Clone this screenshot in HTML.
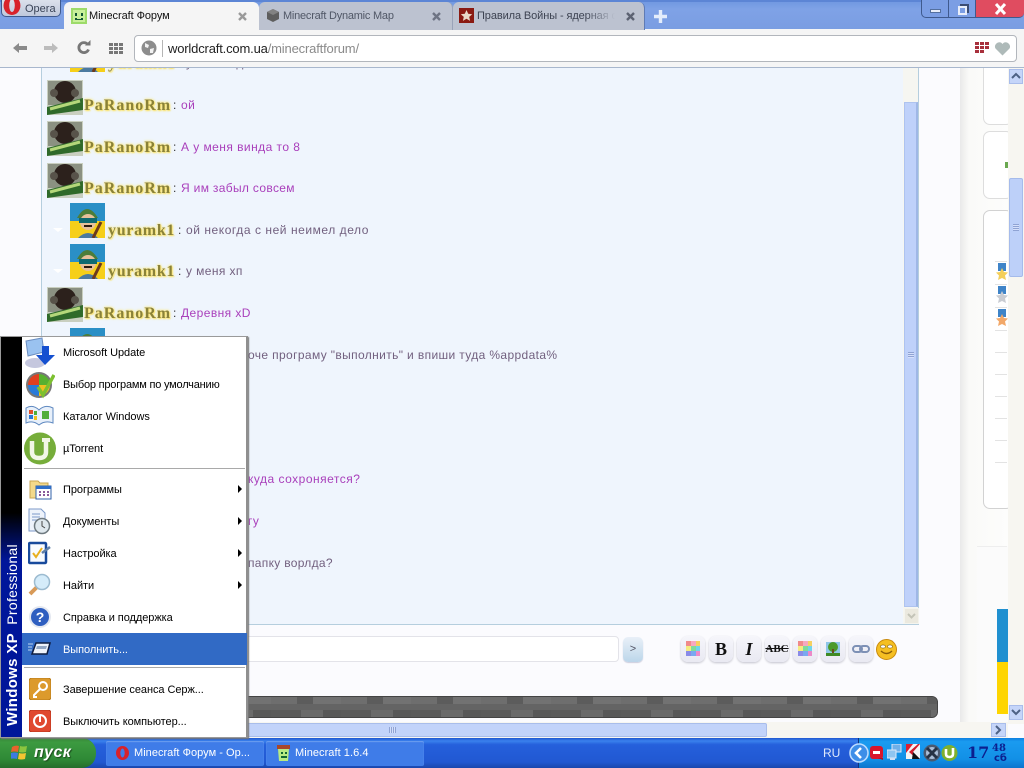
<!DOCTYPE html>
<html lang="ru"><head><meta charset="utf-8"><title>Minecraft Форум</title>
<style>
*{box-sizing:border-box}
html,body{margin:0;padding:0;width:1024px;height:768px;overflow:hidden;background:#fbfbfe;font-family:"Liberation Sans","DejaVu Sans",sans-serif}
.a{position:absolute}
.t{position:absolute;white-space:nowrap;line-height:14px}
.msg{position:absolute;font-size:12px;letter-spacing:.45px;white-space:nowrap;line-height:14px;color:#a93fbb}
.g{color:#72607f}
.name{position:absolute;font:bold 16px/18px "Liberation Serif",serif;letter-spacing:1px;color:#8a8238;white-space:nowrap;text-shadow:0 0 2px #ffe97a,0 0 3px #ffe97a,1px 1px 1px #f7e27a}
.y{letter-spacing:.7px}
.mi{position:absolute;left:63px;font-size:11px;letter-spacing:-.06px;line-height:14px;color:#000;white-space:nowrap}
.arr{position:absolute;left:238px;width:0;height:0;border-left:4px solid #000;border-top:4px solid transparent;border-bottom:4px solid transparent}
.tb{position:absolute;top:636px;width:24px;height:26px;border-radius:7px;background:linear-gradient(#f6f6fb,#e9e9f2);box-shadow:0 1px 2px #c2c2cc;text-align:center}
.hl{position:absolute;left:995px;width:12px;height:1px;background:#e3e3e3}
.tri{position:absolute;left:53px;width:0;height:0;border-left:5px solid transparent;border-right:5px solid transparent;border-top:4px solid #fff}
</style></head><body>
<svg width="0" height="0" style="position:absolute"><defs>
<symbol id="p" viewBox="0 0 36 35"><rect width="36" height="35" fill="#c9cfc0"/><rect x="1" y="1" width="34" height="24" fill="#8b9182"/><circle cx="18" cy="12" r="11" fill="#2c211c"/><circle cx="7" cy="13" r="4" fill="#58534a"/><circle cx="28" cy="13" r="4" fill="#58534a"/><path d="M0 27 L36 18 L36 30 L0 35Z" fill="#2f6a2a"/><path d="M3 29 L33 21" stroke="#b4d77a" stroke-width="3"/></symbol>
<symbol id="y" viewBox="0 0 35 35"><rect width="35" height="18" fill="#2a8fc6"/><rect y="18" width="35" height="17" fill="#f6cf19"/><path d="M7 15 Q17 -3 28 15Z" fill="#4c7d3a"/><ellipse cx="18" cy="19" rx="8" ry="8" fill="#e7c09a"/><rect x="9" y="15" width="18" height="5" fill="#0f6a70"/><path d="M14 23h8" stroke="#2a1a10" stroke-width="2"/><path d="M8 35 Q18 25 28 35Z" fill="#4b7aa0"/><path d="M23 35 L31 19" stroke="#6b3a1e" stroke-width="3"/></symbol>
</defs></svg>

<!-- page content -->
<div class="a" style="left:0;top:68px;width:1008px;height:656px;background:#fbfbfe"></div>
<div class="a" style="left:960px;top:68px;width:48px;height:656px;background:linear-gradient(90deg,#e9e9e9,#fafaf8 9px,#fdfdfc)"></div>
<div class="a" style="left:41px;top:68px;width:878px;height:557px;background:#eff5fd;border:1px solid #b5cede;border-top:0"></div>

<!-- right widgets -->
<div class="a" style="left:983px;top:60px;width:30px;height:65px;border:1px solid #ddd;border-radius:7px;background:#fff"></div>
<div class="a" style="left:983px;top:131px;width:30px;height:68px;border:1px solid #ddd;border-radius:7px;background:#fff"></div>
<div class="a" style="left:1005px;top:162px;width:3px;height:6px;background:#6aa84f"></div>
<div class="a" style="left:983px;top:210px;width:30px;height:299px;border:1px solid #d2d2d2;border-radius:7px;background:#fff"></div>
<div class="hl" style="top:261px"></div><div class="hl" style="top:284px"></div><div class="hl" style="top:307px"></div><div class="hl" style="top:330px"></div><div class="hl" style="top:352px"></div><div class="hl" style="top:374px"></div><div class="hl" style="top:396px"></div><div class="hl" style="top:418px"></div><div class="hl" style="top:440px"></div><div class="hl" style="top:462px"></div>
<svg class="a" style="left:995px;top:262px" width="14" height="70" viewBox="0 0 14 70"><path d="M3 1h8v8H3z" fill="#3f84c8"/><path d="M7 6l2 4 4 .5-3 3 1 4.500-4-2-4 2 1-4.500-3-3 4-.5z" fill="#f4cf5a"/><path d="M3 24h8v8H3z" fill="#3f84c8"/><path d="M7 29l2 4 4 .5-3 3 1 4.500-4-2-4 2 1-4.500-3-3 4-.5z" fill="#c9ccd2"/><path d="M3 47h8v8H3z" fill="#3f84c8"/><path d="M7 52l2 4 4 .5-3 3 1 4.500-4-2-4 2 1-4.500-3-3 4-.5z" fill="#f2a869"/></svg>
<div class="a" style="left:977px;top:546px;width:31px;height:178px;background:#fbfbfb"></div>
<div class="a" style="left:977px;top:546px;width:30px;height:1px;background:#eee"></div>
<div class="a" style="left:997px;top:609px;width:11px;height:53px;background:#2090d0"></div>
<div class="a" style="left:997px;top:662px;width:11px;height:52px;background:#fed500"></div>

<!-- chat -->
<svg class="a" style="left:70px;top:37px" width="35" height="35"><use href="#y"/></svg>
<div class="name y" style="left:108px;top:55px">yuramk1</div>
<div class="msg g" style="left:186px;top:56px">у меня хд</div>
<svg class="a" style="left:47px;top:80px" width="36" height="35"><use href="#p"/></svg>
<div class="name" style="left:84px;top:97px">PaRanoRm</div><div class="t" style="left:173px;top:98px;font-size:12px;color:#333">:</div><div class="msg" style="left:181px;top:98px">ой</div>
<svg class="a" style="left:47px;top:121px" width="36" height="35"><use href="#p"/></svg>
<div class="name" style="left:84px;top:139px">PaRanoRm</div><div class="t" style="left:173px;top:140px;font-size:12px;color:#333">:</div><div class="msg" style="left:181px;top:140px">А у меня винда то 8</div>
<svg class="a" style="left:47px;top:163px" width="36" height="35"><use href="#p"/></svg>
<div class="name" style="left:84px;top:180px">PaRanoRm</div><div class="t" style="left:173px;top:181px;font-size:12px;color:#333">:</div><div class="msg" style="left:181px;top:181px;letter-spacing:.33px">Я им забыл совсем</div>
<svg class="a" style="left:70px;top:203px" width="35" height="35"><use href="#y"/></svg><div class="tri" style="top:228px"></div>
<div class="name y" style="left:108px;top:222px">yuramk1</div><div class="t" style="left:178px;top:223px;font-size:12px;color:#333">:</div><div class="msg g" style="left:186px;top:223px;letter-spacing:.55px">ой некогда с ней неимел дело</div>
<svg class="a" style="left:70px;top:244px" width="35" height="35"><use href="#y"/></svg><div class="tri" style="top:269px"></div>
<div class="name y" style="left:108px;top:263px">yuramk1</div><div class="t" style="left:178px;top:264px;font-size:12px;color:#333">:</div><div class="msg g" style="left:186px;top:264px;letter-spacing:.4px">у меня хп</div>
<svg class="a" style="left:47px;top:287px" width="36" height="35"><use href="#p"/></svg>
<div class="name" style="left:84px;top:305px">PaRanoRm</div><div class="t" style="left:173px;top:306px;font-size:12px;color:#333">:</div><div class="msg" style="left:181px;top:306px;letter-spacing:.42px">Деревня xD</div>
<svg class="a" style="left:70px;top:328px" width="35" height="35"><use href="#y"/></svg>
<div class="msg g" style="left:248px;top:348px;letter-spacing:.37px">оче програму "выполнить" и впиши туда %appdata%</div>
<div class="msg" style="left:248px;top:472px;letter-spacing:.5px">куда сохроняется?</div>
<div class="msg" style="left:248px;top:514px">гу</div>
<div class="msg g" style="left:248px;top:556px;letter-spacing:.3px">папку ворлда?</div>

<!-- inner scrollbar -->
<div class="a" style="left:903px;top:68px;width:15px;height:556px;background:#f6f6f1"></div>
<div class="a" style="left:904px;top:102px;width:14px;height:505px;background:#bfd1fa;border:1px solid #aec3ef;border-right:2px solid #9fb7e6"></div>
<div class="a" style="left:908px;top:352px;width:6px;height:6px;background:repeating-linear-gradient(#8fa3d4 0 1px,#d6e0fb 1px 2px)"></div>
<div class="a" style="left:904px;top:608px;width:15px;height:16px;background:#ebe9df;border:1px solid #f4f4ee"></div>
<svg class="a" style="left:906px;top:611px" width="11" height="10"><path d="M2 3l3.500 3.500L9 3" fill="none" stroke="#c4c4b8" stroke-width="2"/></svg>

<!-- input row -->
<div class="a" style="left:240px;top:636px;width:379px;height:26px;background:#fff;border:1px solid #e3e3e9;border-radius:0 4px 4px 0"></div>
<div class="a" style="left:623px;top:637px;width:20px;height:25px;border-radius:5px;background:linear-gradient(#e9f0f8,#bcd6ea);box-shadow:0 1px 1px #ccd;text-align:center;font-size:11px;line-height:25px;color:#556">&gt;</div>
<div class="tb" style="left:681px"><svg width="14" height="16" style="margin-top:5px"><g><rect x="0" y="0" width="5" height="5" fill="#f08a8a"/><rect x="5" y="0" width="5" height="5" fill="#f6a8c0"/><rect x="10" y="0" width="4" height="5" fill="#f5d060"/><rect x="0" y="5" width="5" height="5" fill="#f4ec80"/><rect x="5" y="5" width="5" height="5" fill="#7fdc9a"/><rect x="10" y="5" width="4" height="5" fill="#70d4ec"/><rect x="0" y="10" width="5" height="5" fill="#8a8be8"/><rect x="5" y="10" width="5" height="5" fill="#7aa8f0"/><rect x="10" y="10" width="4" height="5" fill="#ec8ac8"/></g></svg></div>
<div class="tb" style="left:709px;font:bold 18px/26px 'Liberation Serif',serif;color:#111">B</div>
<div class="tb" style="left:737px;font:italic bold 18px/26px 'Liberation Serif',serif;color:#111">I</div>
<div class="tb" style="left:765px;font:bold 11px/26px 'Liberation Serif',serif;color:#111;text-decoration:line-through">ABC</div>
<div class="tb" style="left:793px"><svg width="14" height="16" style="margin-top:5px"><g><rect x="0" y="0" width="5" height="5" fill="#f08a8a"/><rect x="5" y="0" width="5" height="5" fill="#f6a8c0"/><rect x="10" y="0" width="4" height="5" fill="#f5d060"/><rect x="0" y="5" width="5" height="5" fill="#f4ec80"/><rect x="5" y="5" width="5" height="5" fill="#7fdc9a"/><rect x="10" y="5" width="4" height="5" fill="#70d4ec"/><rect x="0" y="10" width="5" height="5" fill="#8a8be8"/><rect x="5" y="10" width="5" height="5" fill="#7aa8f0"/><rect x="10" y="10" width="4" height="5" fill="#ec8ac8"/></g></svg></div>
<div class="tb" style="left:821px"><svg width="16" height="16" style="margin-top:5px"><rect x="1" y="1" width="14" height="13" fill="#8fc6e8"/><circle cx="8" cy="6" r="5" fill="#4c9a2a"/><rect x="7" y="8" width="2" height="5" fill="#6b4a20"/><rect x="1" y="12" width="14" height="3" fill="#3f8a24"/></svg></div>
<div class="tb" style="left:849px"><svg width="18" height="12" style="margin-top:7px"><rect x="1" y="3" width="9" height="6" rx="3" fill="none" stroke="#7d90b5" stroke-width="2"/><rect x="8" y="3" width="9" height="6" rx="3" fill="none" stroke="#7d90b5" stroke-width="2"/></svg></div>
<svg class="a" style="left:876px;top:639px" width="21" height="21"><circle cx="10.500" cy="10.500" r="10" fill="#f5bf22" stroke="#c98a0d"/><ellipse cx="7" cy="7.500" rx="2.500" ry="1.600" fill="#fff" stroke="#7a5a10" stroke-width=".6"/><ellipse cx="14" cy="7.500" rx="2.500" ry="1.600" fill="#fff" stroke="#7a5a10" stroke-width=".6"/><path d="M5 12q5.500 5 11 0" fill="none" stroke="#8a5d0a" stroke-width="1.400"/></svg>

<!-- stone bar -->
<div class="a" style="left:200px;top:696px;width:738px;height:22px;border-radius:0 6px 6px 0;border:1px solid #444;background:#646464;overflow:hidden">
<div class="a" style="left:0;top:0;width:100%;height:7px;background:repeating-linear-gradient(90deg,#6e6e6e 0 26px,#5c5c5c 26px 42px,#727272 42px 70px)"></div>
<div class="a" style="left:0;top:13px;width:100%;height:8px;background:repeating-linear-gradient(90deg,#5a5a5a 0 30px,#6a6a6a 30px 52px,#585858 52px 70px)"></div>
</div>

<!-- main scrollbars -->
<div class="a" style="left:1008px;top:68px;width:16px;height:656px;background:#f7f6f1"></div>
<div class="a" style="left:1009px;top:69px;width:14px;height:15px;background:#c5d5f9;border:1px solid #a9bdeb"></div>
<svg class="a" style="left:1010px;top:71px" width="12" height="11"><path d="M2 7l4-4 4 4" fill="none" stroke="#4d6185" stroke-width="2"/></svg>
<div class="a" style="left:1009px;top:178px;width:14px;height:99px;background:#bdd0f9;border:1px solid #a5bbeb;border-radius:2px"></div>
<div class="a" style="left:1013px;top:224px;width:6px;height:7px;background:repeating-linear-gradient(#8fa3d4 0 1px,#d6e0fb 1px 2px)"></div>
<div class="a" style="left:1009px;top:705px;width:14px;height:15px;background:#c5d5f9;border:1px solid #a9bdeb"></div>
<svg class="a" style="left:1010px;top:707px" width="12" height="11"><path d="M2 3l4 4 4-4" fill="none" stroke="#4d6185" stroke-width="2"/></svg>
<div class="a" style="left:0;top:722px;width:1008px;height:16px;background:#f7f6f1"></div>
<div class="a" style="left:200px;top:723px;width:567px;height:14px;background:#c2d3fa;border:1px solid #a9bdeb;border-radius:2px"></div>
<div class="a" style="left:389px;top:727px;width:7px;height:6px;background:repeating-linear-gradient(90deg,#8fa3d4 0 1px,#d6e0fb 1px 2px)"></div>
<div class="a" style="left:991px;top:723px;width:15px;height:14px;background:#c5d5f9;border:1px solid #a9bdeb"></div>
<svg class="a" style="left:993px;top:725px" width="11" height="10"><path d="M3 1l4 4-4 4" fill="none" stroke="#4d6185" stroke-width="2"/></svg>

<!-- browser chrome -->
<div class="a" style="left:0;top:0;width:1024px;height:30px;background:linear-gradient(#6e96e0,#7fa2e6 30%,#7a9de2)"></div>
<div class="a" style="left:0;top:0;width:1024px;height:2px;background:#5c85d5"></div>
<div class="a" style="left:0;top:29px;width:1024px;height:39px;background:#f5f5f5;border-bottom:1px solid #a8b7cd"></div>
<div class="a" style="left:1px;top:-3px;width:60px;height:20px;background:linear-gradient(#dfe4ee,#bfc8dc);border:1px solid #3f5a8e;border-radius:0 0 5px 5px"></div>
<svg class="a" style="left:2px;top:0" width="20" height="16"><path d="M10-4a8 9 0 100 19 8 9 0 100-19zm0 3a2.800 6.500 0 110 13 2.800 6.500 0 110-13z" fill="#d8222b" fill-rule="evenodd"/></svg>
<div class="t" style="left:25px;top:2px;font-size:11px;color:#3a4458">Opera</div>
<!-- tabs -->
<div class="a" style="left:64px;top:2px;width:195px;height:28px;background:#f5f5f5;border-radius:6px 6px 0 0"></div>
<svg class="a" style="left:71px;top:8px" width="16" height="16"><rect width="16" height="16" fill="#9ddb6a"/><rect x="2" y="2" width="12" height="12" fill="#c8f09a"/><rect x="4" y="5" width="2" height="3" fill="#153"/><rect x="10" y="5" width="2" height="3" fill="#153"/><path d="M4 10h2v1h4v-1h2v2H4z" fill="#153"/></svg>
<div class="t" style="left:89px;top:9px;font-size:11px;letter-spacing:-.07px;color:#111">Minecraft Форум</div>
<svg class="a" style="left:237px;top:11px" width="11" height="11"><path d="M2 2l7 7M9 2l-7 7" stroke="#9a9a9a" stroke-width="2.400"/></svg>
<div class="a" style="left:259px;top:2px;width:194px;height:28px;background:#bcc2d0;border-radius:6px 6px 0 0;border-right:1px solid #9aa3b8"></div>
<svg class="a" style="left:266px;top:8px" width="14" height="15"><path d="M7 1l6 3v7l-6 3-6-3V4z" fill="#5e5e5e"/><path d="M7 1l6 3-6 3-6-3z" fill="#828282"/></svg>
<div class="t" style="left:283px;top:9px;font-size:11px;letter-spacing:-.23px;color:#505766">Minecraft Dynamic Map</div>
<svg class="a" style="left:431px;top:11px" width="11" height="11"><path d="M2 2l7 7M9 2l-7 7" stroke="#6e7484" stroke-width="2.400"/></svg>
<div class="a" style="left:453px;top:2px;width:192px;height:28px;background:#bcc2d0;border-radius:6px 6px 0 0;border-right:1px solid #5f7bb5"></div>
<svg class="a" style="left:459px;top:8px" width="15" height="15"><rect width="15" height="15" fill="#8a1a12"/><path d="M7.500 2l1.700 3.800 4 .4-3 2.700.9 4-3.600-2.100-3.600 2.100.9-4-3-2.700 4-.4z" fill="#e9d9c8"/></svg>
<div class="t" style="left:477px;top:9px;width:138px;overflow:hidden;font-size:11px;letter-spacing:-.1px;color:#3d4352">Правила Войны - ядерная с</div>
<div class="a" style="left:585px;top:5px;width:30px;height:22px;background:linear-gradient(90deg,rgba(188,194,208,0),#bcc2d0)"></div>
<svg class="a" style="left:625px;top:11px" width="11" height="11"><path d="M2 2l7 7M9 2l-7 7" stroke="#5c6272" stroke-width="2.400"/></svg>
<svg class="a" style="left:654px;top:10px" width="13" height="13"><path d="M6.500 0v13M0 6.500h13" stroke="#e4edfb" stroke-width="3.400"/></svg>
<!-- win buttons -->
<div class="a" style="left:921px;top:0;width:28px;height:18px;background:#7b9ee4;border:1px solid #3f5a8e;border-top:0;border-radius:0 0 0 5px"></div>
<div class="a" style="left:949px;top:0;width:27px;height:18px;background:#7b9ee4;border-bottom:1px solid #3f5a8e;border-right:1px solid #3f5a8e"></div>
<div class="a" style="left:976px;top:0;width:48px;height:18px;background:#e04c60;border-bottom:1px solid #3f5a8e;border-radius:0 0 5px 0"></div>
<div class="a" style="left:930px;top:9px;width:11px;height:4px;background:#e8eefa;border:1px solid #54709f"></div>
<div class="a" style="left:960px;top:4px;width:9px;height:9px;border:2px solid #3a4c73;background:#9fb9ec"></div>
<div class="a" style="left:958px;top:6px;width:9px;height:9px;border:2px solid #e8eefa;background:#7b9ee4"></div>
<svg class="a" style="left:994px;top:3px" width="13" height="12"><path d="M2 1l9 10M11 1L2 11" stroke="#fff" stroke-width="3"/></svg>
<!-- toolbar -->
<svg class="a" style="left:12px;top:41px" width="16" height="14"><path d="M1 7l6-5v3h8v4H7v3z" fill="#8a8a8a"/></svg>
<svg class="a" style="left:43px;top:41px" width="16" height="14"><path d="M15 7L9 2v3H1v4h8v3z" fill="#bcbcbc"/></svg>
<svg class="a" style="left:76px;top:40px" width="15" height="16"><path d="M11.800 4.500A5 5 0 1012.500 9.500" fill="none" stroke="#777" stroke-width="2.800"/><path d="M9 5.500h5.500V0z" fill="#777"/></svg>
<svg class="a" style="left:109px;top:43px" width="14" height="11" fill="#777"><rect width="4" height="3"/><rect x="5" width="4" height="3"/><rect x="10" width="4" height="3"/><rect y="4" width="4" height="3"/><rect x="5" y="4" width="4" height="3"/><rect x="10" y="4" width="4" height="3"/><rect y="8" width="4" height="3"/><rect x="5" y="8" width="4" height="3"/><rect x="10" y="8" width="4" height="3"/></svg>
<div class="a" style="left:134px;top:35px;width:883px;height:27px;background:#fff;border:1px solid #b2b6bc;border-radius:4px"></div>
<svg class="a" style="left:141px;top:40px" width="16" height="16"><circle cx="8" cy="8" r="7.500" fill="#8d8d8d"/><path d="M4 3l4 2-1 3-3-1zM9 9l4-1-1 5-3 0z" fill="#f2f2f2"/></svg>
<div class="a" style="left:162px;top:40px;width:1px;height:17px;background:#b5b5b5"></div>
<div class="t" style="left:168px;top:42px;font-size:13px;letter-spacing:-.17px;color:#222">worldcraft.com.ua<span style="color:#8a8a8a">/minecraftforum/</span></div>
<svg class="a" style="left:975px;top:42px" width="15" height="13" fill="#a8303c"><rect width="4" height="3"/><rect x="5" width="4" height="3"/><rect x="10" width="4" height="3"/><rect y="4" width="4" height="3"/><rect x="5" y="4" width="4" height="3"/><rect x="10" y="4" width="4" height="3"/><rect y="8" width="4" height="3"/><rect x="5" y="8" width="4" height="3"/></svg>
<svg class="a" style="left:994px;top:41px" width="17" height="15"><path d="M8.500 14.500L1.500 7.500C-1 3.500 5.500-1.500 8.500 3c3-4.500 9.500.5 7 4.500z" fill="#aebab9"/></svg>

<!-- taskbar -->
<div class="a" style="left:0;top:738px;width:1024px;height:30px;background:linear-gradient(#1f56cf,#3a82ee 10%,#2560dc 22%,#2158d2 80%,#1a46ad)"></div>
<div class="a" style="left:858px;top:738px;width:166px;height:30px;background:linear-gradient(#0e7fe0,#1a9bf0 12%,#1290e6 70%,#0c74cd);border-left:1px solid #10337f"></div>
<div class="a" style="left:0;top:738px;width:96px;height:30px;background:linear-gradient(#3a8a3a,#3c9a40 15%,#2f8a36 70%,#256d2b);border-radius:0 14px 14px 0"></div>
<svg class="a" style="left:11px;top:744px" width="18" height="17"><path d="M1 3q3-2 7-1l-1 6q-4-1-7 0z" fill="#e8632c"/><path d="M9 2q3 1 7 0l-1 6q-4 1-7 0z" fill="#8bc53f"/><path d="M0 9q3-1 7 0l-1 6q-4-1-7 0z" fill="#3d7ae0"/><path d="M8 9q3 1 7 0l-1 6q-4 1-7 0z" fill="#f4c531"/></svg>
<div class="t" style="left:34px;top:745px;font:italic bold 16px/16px 'Liberation Sans',sans-serif;letter-spacing:.4px;color:#fff;text-shadow:1px 1px 1px #1c4c1c">пуск</div>
<div class="a" style="left:106px;top:741px;width:158px;height:25px;background:#3f7ce8;border-radius:2px;box-shadow:inset 0 1px 1px #6fa0f0"></div>
<div class="a" style="left:266px;top:741px;width:158px;height:25px;background:#3f7ce8;border-radius:2px;box-shadow:inset 0 1px 1px #6fa0f0"></div>
<svg class="a" style="left:115px;top:745px" width="15" height="16"><path d="M7.500 1a6.500 7 0 100 14 6.500 7 0 100-14zm0 2.500a2.200 4.500 0 110 9 2.200 4.500 0 110-9z" fill="#d8222b" fill-rule="evenodd"/></svg>
<div class="t" style="left:134px;top:746px;font-size:11px;letter-spacing:.03px;color:#fff">Minecraft Форум - Op...</div>
<svg class="a" style="left:275px;top:744px" width="17" height="18"><path d="M2 1h13v4H2z" fill="#a8472a"/><path d="M3 5h11l-1 12H4z" fill="#b7ea82"/><rect x="6" y="8" width="2" height="2" fill="#163"/><rect x="10" y="8" width="2" height="2" fill="#163"/><path d="M6 12h6v2H6z" fill="#163"/></svg>
<div class="t" style="left:295px;top:746px;font-size:11px;letter-spacing:.05px;color:#fff">Minecraft 1.6.4</div>
<div class="t" style="left:823px;top:746px;font-size:12px;color:#dfe9fb">RU</div>
<svg class="a" style="left:849px;top:743px" width="20" height="20"><circle cx="10" cy="10" r="9" fill="#3d8ee8" stroke="#bcdcff" stroke-width="1.600"/><path d="M12 5l-5 5 5 5" fill="none" stroke="#fff" stroke-width="2.600"/></svg>
<svg class="a" style="left:870px;top:746px" width="15" height="15"><rect x="0" y="0" width="13" height="13" rx="3" fill="#d8162c"/><rect x="3" y="5" width="7" height="3" fill="#fff"/><path d="M8 12l5 0 0 2z" fill="#b01020"/></svg>
<svg class="a" style="left:887px;top:744px" width="15" height="17"><rect x="5" y="0" width="9" height="8" fill="#6fb0e8" stroke="#dbe9fa"/><rect x="0" y="6" width="9" height="8" fill="#8fc5f0" stroke="#dbe9fa"/><rect x="3" y="14" width="5" height="2" fill="#cfe0f5"/></svg>
<svg class="a" style="left:906px;top:744px" width="15" height="17"><rect width="14" height="15" fill="#f4f4f4"/><path d="M0 0h7L0 9z" fill="#dd2030"/><path d="M3 8L12 0h2L7 8l7 7h-3z" fill="#d01a2a"/><path d="M7 8l7 7H6z" fill="#111"/></svg>
<svg class="a" style="left:923px;top:744px" width="18" height="18"><circle cx="9" cy="9" r="8.500" fill="#4b5a70"/><circle cx="9" cy="9" r="6" fill="#a9bdd6"/><path d="M4 4l10 10M14 4L4 14" stroke="#263244" stroke-width="3"/></svg>
<svg class="a" style="left:941px;top:744px" width="17" height="18"><circle cx="8.500" cy="9" r="8" fill="#7fb02f"/><path d="M5 5v5q0 3 3.500 3t3.500-3V4" fill="none" stroke="#fff" stroke-width="2.600"/></svg>
<div class="t" style="left:967px;top:744px;font:bold 16px/18px 'DejaVu Serif',serif;color:#0c1f8f">17</div>
<div class="t" style="left:992px;top:743px;font:bold 10px/11px 'DejaVu Serif',serif;color:#0c1f8f">48</div>
<div class="t" style="left:994px;top:753px;font:bold 10px/11px 'DejaVu Sans',sans-serif;color:#0c1f8f">сб</div>

<!-- start menu -->
<div class="a" style="left:0;top:336px;width:248px;height:402px;background:#fff;border:1px solid #9a9a9a;border-right:2px solid #8f8f8f;box-shadow:1px 1px 1px #777"></div>
<div class="a" style="left:1px;top:337px;width:21px;height:400px;background:linear-gradient(#000 0,#000 44%,#00169a 56%,#00169a 100%)"></div>
<div class="a" style="left:22px;top:633px;width:225px;height:32px;background:#316ac5"></div>
<div class="a" style="left:24px;top:468px;width:221px;height:1px;background:#a9a9a9"></div>
<div class="a" style="left:24px;top:667px;width:221px;height:1px;background:#a9a9a9"></div>
<div class="t" style="left:-98px;top:608px;width:220px;height:16px;line-height:16px;transform:rotate(-90deg);font-size:14px;color:#fff;text-align:left;letter-spacing:.3px"><b style="font-size:15px">Windows XP</b>&nbsp; Professional</div>

<svg class="a" style="left:24px;top:337px" width="31" height="32"><path d="M2 4l16-3 2 14-16 4z" fill="#9ac2f0" stroke="#6b8dc0"/><ellipse cx="11" cy="26" rx="10" ry="5" fill="#c5c7de"/><path d="M18 9h7v9h6L21 28 12 18h6z" fill="#1550d0"/></svg>
<svg class="a" style="left:25px;top:371px" width="30" height="28"><circle cx="14" cy="14" r="13" fill="#777"/><path d="M14 3a11 11 0 00-11 11h11z" fill="#e04020"/><path d="M14 3a11 11 0 0111 11H14z" fill="#58b030"/><path d="M3 14a11 11 0 0011 11V14z" fill="#2a7ad8"/><path d="M14 14v11a11 11 0 0011-11z" fill="#f0c020"/><path d="M13 16l5 8 11-20" fill="none" stroke="#7cc030" stroke-width="3.400"/></svg>
<svg class="a" style="left:24px;top:403px" width="31" height="25"><path d="M2 5q7-4 13 2 6-6 14-2v15q-8-3-14 2-6-5-13-2z" fill="#e8f0fa" stroke="#5e88c0"/><rect x="5" y="7" width="4" height="4" fill="#e0502a"/><rect x="10" y="8" width="3" height="4" fill="#4fae3a"/><rect x="5" y="12" width="4" height="4" fill="#2a78d8"/><rect x="10" y="13" width="3" height="4" fill="#f0c020"/><rect x="18" y="8" width="7" height="8" fill="#4fae3a"/></svg>
<svg class="a" style="left:24px;top:432px" width="32" height="33"><circle cx="16" cy="16.500" r="16" fill="#76ad3a"/><path d="M8 9v11q0 6 7 6t7-6V8" fill="none" stroke="#f2f6e6" stroke-width="4.500"/><path d="M18 8h8" stroke="#f2f6e6" stroke-width="4"/></svg>

<svg class="a" style="left:29px;top:478px" width="23" height="23"><path d="M1 3h8l2 2h8v15H1z" fill="#f3d98a" stroke="#c8a650"/><rect x="7" y="8" width="15" height="13" fill="#fff" stroke="#3062a8"/><rect x="7" y="8" width="15" height="3" fill="#2f6fc8"/><path d="M10 13h2v2h-2zm4 0h2v2h-2zm4 0h2v2h-2zm-8 3h2v2h-2zm4 0h2v2h-2zm4 0h2v2h-2z" fill="#8a5a9a"/></svg>
<svg class="a" style="left:27px;top:508px" width="25" height="27"><path d="M2 1h12l4 4v18H2z" fill="#eef3fb" stroke="#7c9ac8"/><path d="M5 6h8M5 9h8M5 12h5" stroke="#7c9ac8"/><circle cx="15" cy="18" r="7.500" fill="#dfe8ee" stroke="#6f7a80" stroke-width="1.500"/><path d="M15 13v5l3 2" fill="none" stroke="#444"/></svg>
<svg class="a" style="left:28px;top:541px" width="25" height="24"><rect x="1" y="2" width="17" height="20" rx="1" fill="#f8fbff" stroke="#184a9c" stroke-width="2.500"/><path d="M5 12l3 4 6-9" fill="none" stroke="#e8b020" stroke-width="2"/><path d="M14 12l8-6" stroke="#5f7fa8" stroke-width="2.500"/></svg>
<svg class="a" style="left:27px;top:573px" width="25" height="24"><path d="M3 21l8-8" stroke="#d89a58" stroke-width="4"/><circle cx="15" cy="9" r="7.500" fill="#d5ecfa" stroke="#9cbbd0" stroke-width="1.500"/></svg>
<svg class="a" style="left:28px;top:605px" width="24" height="24"><circle cx="12" cy="12" r="11" fill="#e4e8f0"/><circle cx="12" cy="12" r="9" fill="#2e5ec0"/><text x="12" y="17" text-anchor="middle" font-family="Liberation Sans" font-weight="bold" font-size="14" fill="#fff">?</text></svg>
<svg class="a" style="left:27px;top:640px" width="24" height="18"><path d="M9 3h14l-3 11H5z" fill="#eef3fa" stroke="#0d1c40" stroke-width="1.500"/><path d="M1 4h5M1 7h4M1 10h4" stroke="#bcd4f0"/><path d="M10 6h10l-1 3H9z" fill="#94a8c4"/></svg>
<svg class="a" style="left:29px;top:678px" width="22" height="22"><rect width="22" height="22" rx="3" fill="#dc9a2c" stroke="#b87a18"/><circle cx="14" cy="8" r="4" fill="none" stroke="#fff" stroke-width="2"/><path d="M11 11l-6 6v2h3" fill="none" stroke="#fff" stroke-width="2"/></svg>
<svg class="a" style="left:29px;top:710px" width="22" height="22"><rect width="22" height="22" rx="3" fill="#e0492f" stroke="#b83218"/><circle cx="11" cy="11" r="6" fill="none" stroke="#fff" stroke-width="2"/><path d="M11 6v6" stroke="#fff" stroke-width="2"/></svg>

<div class="mi" style="top:346px">Microsoft Update</div>
<div class="mi" style="top:378px;letter-spacing:-.2px">Выбор программ по умолчанию</div>
<div class="mi" style="top:410px">Каталог Windows</div>
<div class="mi" style="top:442px">µTorrent</div>
<div class="mi" style="top:483px">Программы</div><div class="arr" style="top:485px"></div>
<div class="mi" style="top:515px">Документы</div><div class="arr" style="top:517px"></div>
<div class="mi" style="top:547px">Настройка</div><div class="arr" style="top:549px"></div>
<div class="mi" style="top:579px">Найти</div><div class="arr" style="top:581px"></div>
<div class="mi" style="top:611px">Справка и поддержка</div>
<div class="mi" style="top:643px;color:#fff">Выполнить...</div>
<div class="mi" style="top:683px">Завершение сеанса Серж...</div>
<div class="mi" style="top:715px">Выключить компьютер...</div>
</body></html>
